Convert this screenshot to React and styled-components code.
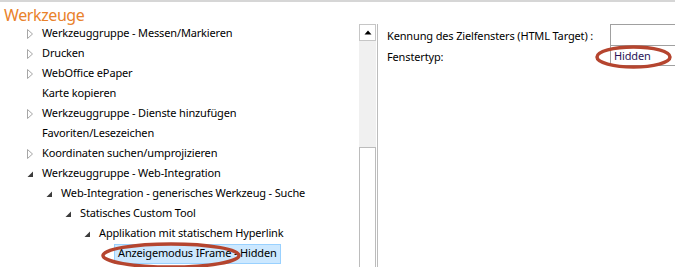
import React from "react";
import styled, { createGlobalStyle } from "styled-components";

const GlobalStyle = createGlobalStyle`
  html, body {
    margin: 0;
    padding: 0;
    background: #fff;
  }
  body {
    font-family: "Segoe UI", "Noto Sans", "Liberation Sans", sans-serif;
    font-size: 11px;
    letter-spacing: -0.15px;
    color: #000;
  }
`;

const Page = styled.div`
  width: 675px;
  height: 267px;
  overflow: hidden;
  border-top: 2px solid #d6d6d6;
  box-sizing: border-box;
  display: flex;
  flex-direction: column;
`;

const Title = styled.h1`
  margin: 0;
  padding: 4px 0 0 4px;
  height: 18px;
  line-height: 18px;
  font-size: 16px;
  letter-spacing: -0.4px;
  font-weight: normal;
  color: #e9822b;
`;

const Body = styled.div`
  flex: 1;
  display: flex;
  min-height: 0;
`;

const TreePanel = styled.div`
  width: 359px;
  display: flex;
  flex-direction: column;
`;

const Row = styled.div`
  height: 20px;
  display: flex;
  align-items: center;
  padding-left: ${(p) => 22 + p.$level * 19}px;
  white-space: nowrap;
`;

const Toggle = styled.span`
  width: 16px;
  height: 20px;
  display: flex;
  align-items: center;
  justify-content: center;
  flex: none;
`;

const Label = styled.span`
  position: relative;
  padding: 0 3px 2px;
  border: 1px solid ${(p) => (p.$selected ? "#99d1ff" : "transparent")};
  background: ${(p) => (p.$selected ? "#cce8ff" : "transparent")};
  line-height: 16px;
`;

const Ring = styled.svg`
  position: absolute;
  left: ${(p) => p.$left}px;
  top: ${(p) => p.$top}px;
  pointer-events: none;
  overflow: visible;
`;

const Scrollbar = styled.div`
  width: 17px;
  display: flex;
  flex-direction: column;
  box-sizing: border-box;
`;

const ScrollButton = styled.div`
  height: 17px;
  border: 1px solid #c6c6c6;
  background: #fff;
  display: flex;
  align-items: center;
  justify-content: center;
  box-sizing: border-box;
`;

const ScrollTrack = styled.div`
  height: 106px;
  background: #f0f0f0;
`;

const ScrollThumb = styled.div`
  flex: 1;
  border: 1px solid #bcbcbc;
  border-bottom: none;
  background: #fff;
`;

const Divider = styled.div`
  width: 1px;
  margin-left: 1px;
  background: #bcbcbc;
`;

const PropsPanel = styled.div`
  flex: 1;
  padding-left: 9px;
`;

const PropGrid = styled.div`
  display: grid;
  grid-template-columns: 223px 1fr;
  grid-auto-rows: 21px;
`;

const PropName = styled.div`
  padding-top: 4px;
  line-height: 15px;
  white-space: nowrap;
`;

const PropValue = styled.div`
  position: relative;
  padding: 2px 0 0 3px;
  line-height: 15px;
  border-left: 1px solid #a0a0a0;
  border-top: 1px solid #a0a0a0;
  border-bottom: ${(p) => (p.$last ? "1px solid #a0a0a0" : "none")};
  color: #2b1458;
`;

function Ellipse({ left, top, width, height }) {
  return (
    <Ring $left={left} $top={top} width={width} height={height}>
      <ellipse
        cx={width / 2}
        cy={height / 2}
        rx={width / 2 - 2}
        ry={height / 2 - 2}
        fill="none"
        stroke="#b5452f"
        strokeWidth="3.5"
      />
    </Ring>
  );
}

function ToggleIcon({ state }) {
  if (state === "collapsed") {
    return (
      <svg width="16" height="20" viewBox="0 0 16 20">
        <polygon
          points="5.5,5.5 10.5,10 5.5,14.5"
          fill="none"
          stroke="#a6a6a6"
          strokeWidth="1"
        />
      </svg>
    );
  }
  if (state === "expanded") {
    return (
      <svg width="16" height="20" viewBox="0 0 16 20">
        <polygon points="11,7.5 11,13 5.5,13" fill="#3c3c3c" />
      </svg>
    );
  }
  return null;
}

const items = [
  { level: 0, label: "Werkzeuggruppe - Messen/Markieren", state: "collapsed" },
  { level: 0, label: "Drucken", state: "collapsed" },
  { level: 0, label: "WebOffice ePaper", state: "collapsed" },
  { level: 0, label: "Karte kopieren" },
  { level: 0, label: "Werkzeuggruppe - Dienste hinzufügen", state: "collapsed" },
  { level: 0, label: "Favoriten/Lesezeichen" },
  { level: 0, label: "Koordinaten suchen/umprojizieren", state: "collapsed" },
  { level: 0, label: "Werkzeuggruppe - Web-Integration", state: "expanded" },
  { level: 1, label: "Web-Integration - generisches Werkzeug - Suche", state: "expanded" },
  { level: 2, label: "Statisches Custom Tool", state: "expanded" },
  { level: 3, label: "Applikation mit statischem Hyperlink", state: "expanded" },
  { level: 4, label: "Anzeigemodus IFrame - Hidden", selected: true },
];

export default function App() {
  return (
    <>
      <GlobalStyle />
      <Page>
        <Title>Werkzeuge</Title>
        <Body>
          <TreePanel>
            {items.map((it) => (
              <Row key={it.label} $level={it.level}>
                <Toggle>
                  <ToggleIcon state={it.state} />
                </Toggle>
                <Label $selected={it.selected}>
                  {it.label}
                  {it.selected && (
                    <Ellipse left={-14} top={-3} width={140} height={27} />
                  )}
                </Label>
              </Row>
            ))}
          </TreePanel>
          <Scrollbar>
            <ScrollButton>
              <svg width="8" height="5" viewBox="0 0 8 5">
                <polygon points="0.5,4.5 4,0.5 7.5,4.5" fill="#000" />
              </svg>
            </ScrollButton>
            <ScrollTrack />
            <ScrollThumb />
          </Scrollbar>
          <Divider />
          <PropsPanel>
            <PropGrid>
              <PropName>Kennung des Zielfensters (HTML Target) :</PropName>
              <PropValue />
              <PropName>Fenstertyp:</PropName>
              <PropValue $last>
                Hidden
                <Ellipse left={-16} top={-1} width={77} height={24} />
              </PropValue>
            </PropGrid>
          </PropsPanel>
        </Body>
      </Page>
    </>
  );
}
